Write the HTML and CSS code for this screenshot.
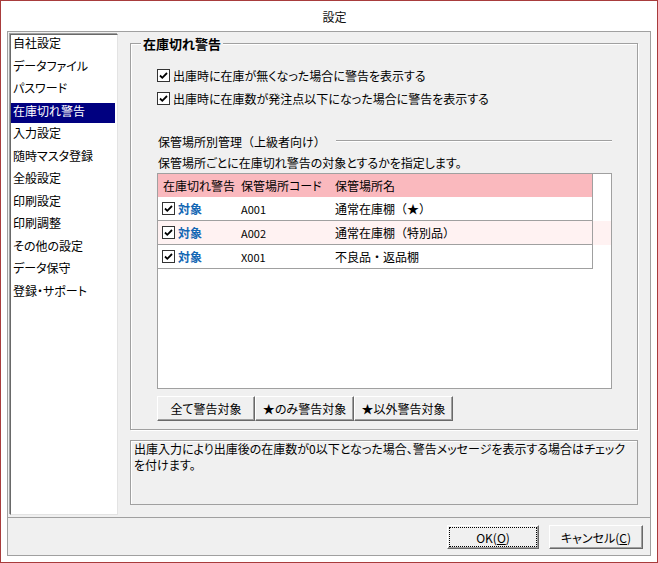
FILE: index.html
```
<!DOCTYPE html>
<html lang="ja">
<head>
<meta charset="utf-8">
<title>設定</title>
<link rel="stylesheet" href="styles.css">
</head>
<body>
<div class="window">
  <div class="titlebar"><span class="title">設定</span></div>
  <div class="client">
    <div class="main">
      <ul class="list">
        <li><span>自社設定</span></li>
        <li><span>データファイル</span></li>
        <li><span>パスワード</span></li>
        <li class="selected"><span>在庫切れ警告</span></li>
        <li><span>入力設定</span></li>
        <li><span>随時マスタ登録</span></li>
        <li><span>全般設定</span></li>
        <li><span>印刷設定</span></li>
        <li><span>印刷調整</span></li>
        <li><span>その他の設定</span></li>
        <li><span>データ保守</span></li>
        <li><span>登録・サポート</span></li>
      </ul>
      <div class="panel">
        <div class="group">
          <span class="group-title">在庫切れ警告</span>
          <div class="check-row">
            <svg class="cb" width="13" height="13" viewBox="0 0 13 13"><rect x="0.5" y="0.5" width="12" height="12" fill="#fff" stroke="#333"/><path d="M3 6.5 L5.3 8.8 L10 4" fill="none" stroke="#000" stroke-width="1.8"/></svg>
            <span>出庫時に在庫が無くなった場合に警告を表示する</span>
          </div>
          <div class="check-row">
            <svg class="cb" width="13" height="13" viewBox="0 0 13 13"><rect x="0.5" y="0.5" width="12" height="12" fill="#fff" stroke="#333"/><path d="M3 6.5 L5.3 8.8 L10 4" fill="none" stroke="#000" stroke-width="1.8"/></svg>
            <span>出庫時に在庫数が発注点以下になった場合に警告を表示する</span>
          </div>
          <div class="subhead"><span>保管場所別管理<span class="fw">（</span>上級者向け<span class="fw">）</span></span></div>
          <p class="hint">保管場所ごとに在庫切れ警告の対象とするかを指定します。</p>
          <div class="grid">
            <div class="grid-head">
              <div class="c1">在庫切れ警告</div>
              <div class="c2">保管場所コード</div>
              <div class="c3">保管場所名</div>
              <div class="c4"></div>
            </div>
            <div class="grid-row">
              <div class="c1"><svg class="cb" width="13" height="13" viewBox="0 0 13 13"><rect x="0.5" y="0.5" width="12" height="12" fill="#fff" stroke="#333"/><path d="M3 6.5 L5.3 8.8 L10 4" fill="none" stroke="#000" stroke-width="1.8"/></svg><span class="target">対象</span></div>
              <div class="c2 code">A001</div>
              <div class="c3 fw">通常在庫棚（★）</div>
              <div class="c4"></div>
            </div>
            <div class="grid-row alt">
              <div class="c1"><svg class="cb" width="13" height="13" viewBox="0 0 13 13"><rect x="0.5" y="0.5" width="12" height="12" fill="#fff" stroke="#333"/><path d="M3 6.5 L5.3 8.8 L10 4" fill="none" stroke="#000" stroke-width="1.8"/></svg><span class="target">対象</span></div>
              <div class="c2 code">A002</div>
              <div class="c3 fw">通常在庫棚（特別品）</div>
              <div class="c4"></div>
            </div>
            <div class="grid-row">
              <div class="c1"><svg class="cb" width="13" height="13" viewBox="0 0 13 13"><rect x="0.5" y="0.5" width="12" height="12" fill="#fff" stroke="#333"/><path d="M3 6.5 L5.3 8.8 L10 4" fill="none" stroke="#000" stroke-width="1.8"/></svg><span class="target">対象</span></div>
              <div class="c2 code">X001</div>
              <div class="c3 fw">不良品・返品棚</div>
              <div class="c4"></div>
            </div>
          </div>
          <div class="btns">
            <button class="btn b1">全て警告対象</button>
            <button class="btn b2">★のみ警告対象</button>
            <button class="btn b3">★以外警告対象</button>
          </div>
        </div>
        <div class="desc">出庫入力により出庫後の在庫数が0以下となった場合、警告メッセージを表示する場合はチェック<br>を付けます。</div>
      </div>
    </div>
    <div class="footer">
      <button class="btn ok"><span class="focus">OK(<u>O</u>)</span></button>
      <button class="btn cancel">キャンセル(<u>C</u>)</button>
    </div>
  </div>
</div>
</body>
</html>
```

FILE: styles.css
```
* { box-sizing: border-box; margin: 0; padding: 0; }
html, body { width: 658px; height: 563px; overflow: hidden; }
body {
  font-family: "Noto Sans CJK JP", "Noto Sans", sans-serif;
  font-size: 12px;
  color: #000;
  background: #fff;
  font-feature-settings: "palt";
}
.fw { font-feature-settings: normal; }
.window {
  width: 658px;
  height: 563px;
  border: 1px solid #a83c3c;
  background: #fff;
  display: flex;
  flex-direction: column;
}
.titlebar {
  height: 30px;
  display: flex;
  align-items: center;
  justify-content: center;
  padding-left: 11px;
  font-size: 12px;
  color: #111;
}
.client {
  flex: 1;
  margin: 0 6px 6px;
  border: 1px solid #a0a0a0;
  background: #f0f0f0;
  display: flex;
  flex-direction: column;
}
.main { display: flex; height: 485px; }
.list {
  width: 108px;
  margin: 2px 0 2px 2px;
  background: #fff;
  border-style: solid;
  border-width: 1px;
  border-color: #696969 #e3e3e3 #e3e3e3 #696969;
  box-shadow: -1px -1px 0 #a0a0a0;
  list-style: none;
}
.list li { height: 22.5px; padding-right: 2px; }
.list li span { display: block; height: 20px; line-height: 16px; padding-left: 2px; white-space: nowrap; }
.list li.selected span { background: #000080; color: #fff; }
.panel { flex: 1; padding: 11px 12px 0 12px; }
.group {
  position: relative;
  height: 387px;
  border: 1px solid #a0a0a0;
  box-shadow: inset 1px 1px 0 #fff, 1px 1px 0 #fff;
  padding: 20px 25px 0 26px;
}
.group-title {
  position: absolute;
  top: -8px;
  left: 10px;
  padding: 0 2px;
  background: #f0f0f0;
  font-weight: bold;
  font-size: 13px;
  line-height: 16px;
}
.check-row { display: flex; align-items: center; height: 23px; gap: 3px; }
.cb { display: block; flex: none; }
.subhead { display: flex; align-items: center; margin-top: 23px; height: 16px; padding-left: 1px; white-space: nowrap; }
.subhead::after {
  content: "";
  flex: 1;
  margin-left: 10px;
  border-top: 1px solid #a0a0a0;
  border-bottom: 1px solid #fff;
}
.hint { margin-top: 6px; line-height: 16px; padding-left: 1px; }
.grid {
  margin-top: 2px;
  height: 216px;
  border: 1px solid #a0a0a0;
  background: #fff;
}
.grid-head, .grid-row { display: grid; grid-template-columns: 78px 94px 263px 1fr; }
.grid-head > div { height: 23px; line-height: 23px; background: #fab9be; padding-left: 5px; white-space: nowrap; }
.grid-head > .c4 { background: #fff; }
.grid-head > .c3, .grid-row > .c3 { border-right: 1px solid #a0a0a0; }
.grid-row > div { height: 24px; border-bottom: 1px solid #a0a0a0; display: flex; align-items: center; padding-left: 5px; white-space: nowrap; }
.grid-row > .c1 { padding-left: 4px; gap: 3px; }
.grid-row > .c4 { border-bottom: none; }
.grid-row.alt { background: #fff2f2; }
.target { color: #1467b4; font-weight: bold; }
.code { font-size: 11px; }
.btns { display: flex; margin-top: 7px; }
.btn {
  font: inherit;
  color: #000;
  height: 25px;
  background: #f0f0f0;
  border: 1px solid;
  border-color: #fff #696969 #696969 #fff;
  box-shadow: inset -1px -1px 0 #a0a0a0;
  white-space: nowrap;
}
.b1 { width: 98px; }
.b2, .b3 { width: 99px; }
.desc {
  margin-top: 10px;
  height: 65px;
  border: 1px solid #a0a0a0;
  box-shadow: inset 1px 1px 0 #fff;
  padding: 0 3px;
  line-height: 16px;
  white-space: nowrap;
  overflow: hidden;
}
.footer {
  flex: 1;
  border-top: 1px solid #a0a0a0;
  display: flex;
  justify-content: flex-end;
  align-items: flex-start;
  padding: 7px 7px 0 0;
  gap: 10px;
}
.footer .btn { height: 24px; }
.ok { width: 92px; padding: 2px; }
.ok .focus { display: flex; align-items: center; justify-content: center; height: 100%; outline: 1px dotted #000; }
.cancel { width: 94px; }
u { text-decoration: underline; text-underline-offset: 1px; }
```
